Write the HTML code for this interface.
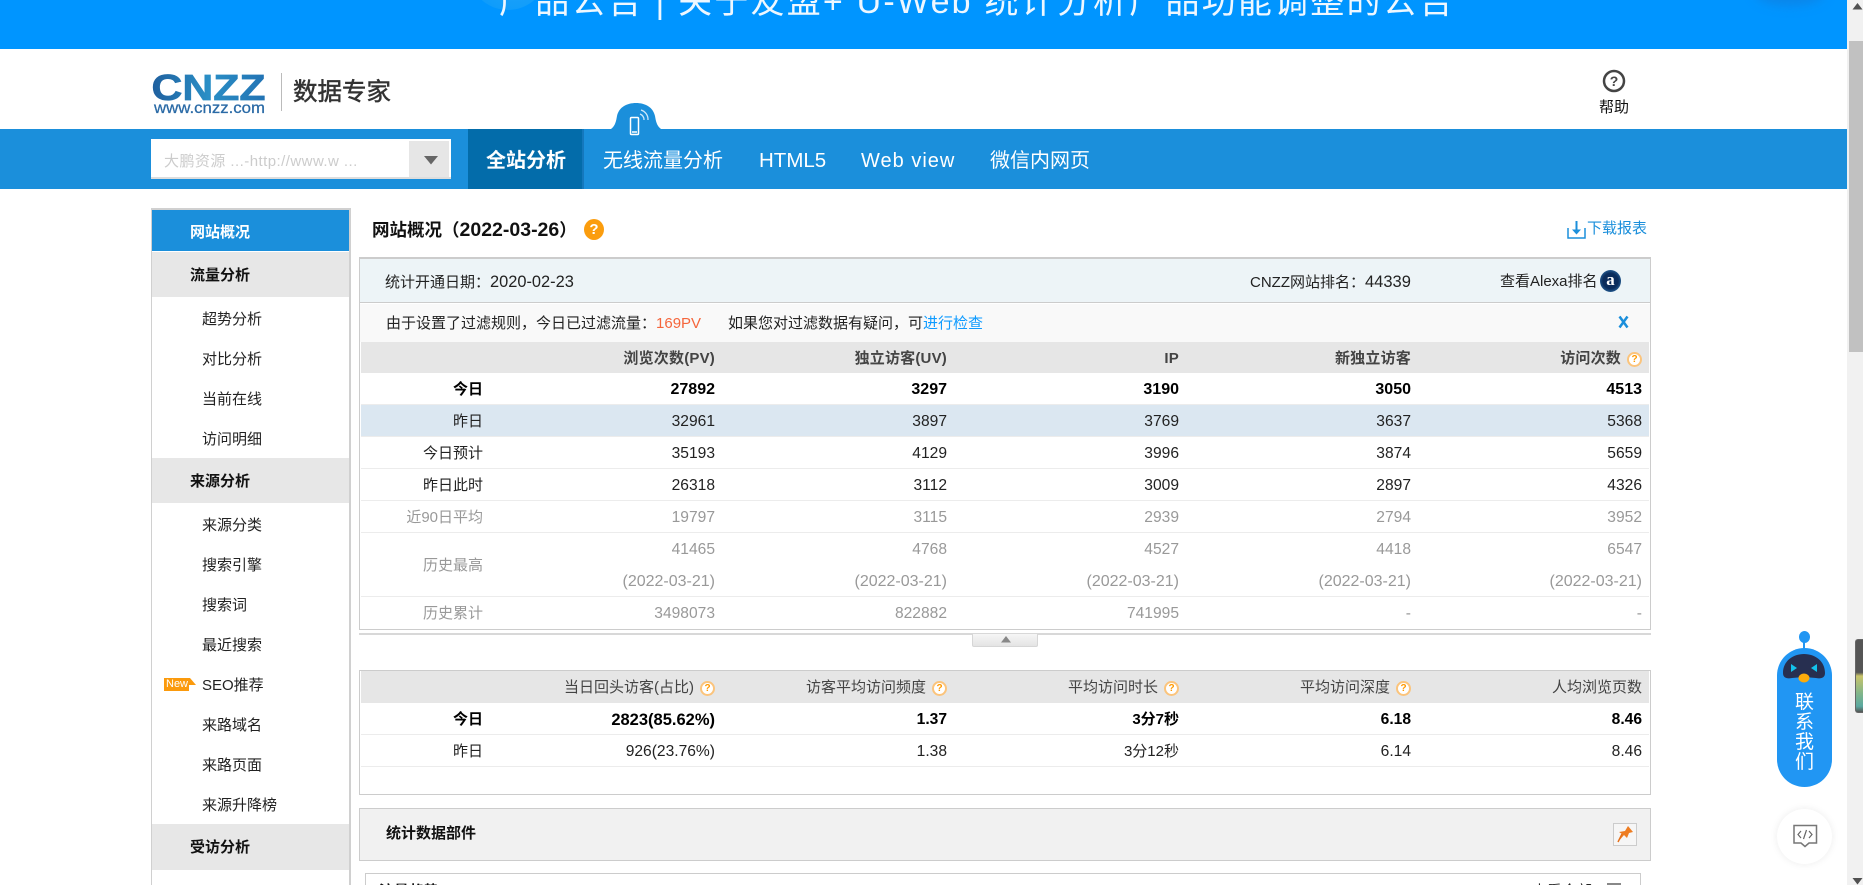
<!DOCTYPE html>
<html lang="zh-CN"><head><meta charset="utf-8"><title>网站概况</title>
<style>
*{box-sizing:border-box;margin:0;padding:0}
html,body{width:1863px;height:885px;overflow:hidden;background:#fff;font-family:"Liberation Sans","Noto Sans CJK SC",sans-serif;font-size:15px;color:#222}
#wrap{position:relative;width:1863px;height:885px;overflow:hidden;background:#fff}
.a{position:absolute;white-space:nowrap}
#banner{position:absolute;left:0;top:0;width:1847px;height:49px;background:#0095ff;overflow:hidden}
#banner .t{position:absolute;left:499px;top:-15px;font-size:34px;line-height:34px;letter-spacing:2.200px;color:#eef7ff;white-space:pre}
#nav{position:absolute;left:0;top:129px;width:1847px;height:60px;background:#1b8fdb}
#nav span{position:absolute;top:0;line-height:64px;font-size:20px;color:#fff;white-space:nowrap}
#side{position:absolute;left:151px;top:208px;width:200px;height:677px;border:1px solid #d0d0d0;border-top:2px solid #d0d0d0;border-right-width:2px;border-bottom:0}
.s{position:absolute;left:202px;font-size:15px;line-height:20px;color:#222;white-space:nowrap}
.g{position:absolute;left:152px;width:197px;background:#e7e7e7}
.h{position:absolute;left:190px;font-size:15px;line-height:20px;font-weight:bold;color:#111;white-space:nowrap}
.box{position:absolute;border:1px solid #ccc}
.r{position:absolute;left:361px;width:1288px;display:flex;border-bottom:1px solid #ececec}
.r>div{width:232px;text-align:right;white-space:nowrap;font-size:15.600px;position:relative;top:1px}
.r>div:first-child{width:122px;font-size:15px}
.r>div:last-child{width:231px}
.hd{background:#e6e6e6;border-bottom:0;color:#444}
.hd>div{font-size:15px!important}
.b1>div{font-weight:bold;color:#444;letter-spacing:.2px}
.r .bo{font-weight:bold;color:#000}
.gy>div{color:#999}
.nm>div{color:#222}
.d{font-size:16px}
.q{display:inline-block;width:15px;height:15px;border:2px solid #fbc47c;border-radius:50%;background:#fff;color:#f90;font-size:10px;line-height:11px;text-align:center;font-weight:bold;margin-left:6px;vertical-align:1px;letter-spacing:0}
</style></head><body>
<div id="wrap">

<div id="banner">
<div style="position:absolute;left:470px;top:-62px;width:76px;height:72px;border-radius:50%;background:radial-gradient(circle at 60% 40%,#2aa6f8,#0e9cfb 75%,#0095ff)"></div>
<div style="position:absolute;left:1755px;top:-22px;width:70px;height:28px;border-radius:50%;background:#0a86ea;filter:blur(5px)"></div>
<div class="t">产品公告 | 关于友盟+ U-Web 统计分析产品功能调整的公告</div>
</div>

<!-- scrollbar -->
<div style="position:absolute;left:1847px;top:0;width:16px;height:885px;background:#f1f1f1"></div>
<div style="position:absolute;left:1849px;top:41px;width:14px;height:311px;background:#c1c1c1"></div>
<svg class="a" style="left:1852px;top:3px" width="11" height="7"><path d="M5.500 0L10.500 6.500H.5z" fill="#505050"/></svg>
<svg class="a" style="left:1852px;top:878px" width="11" height="7"><path d="M5.500 6.500L10.500 0H.5z" fill="#505050"/></svg>
<div style="position:absolute;left:1855px;top:639px;width:8px;height:74px;border-radius:3px 0 0 3px;background:linear-gradient(180deg,#555 0,#555 45%,#c9c46a 50%,#7fb58b 75%,#5aa8a0 92%,#555 100%);border:1px solid #666;border-right:0"></div>

<!-- header -->
<svg class="a" style="left:150px;top:70px" width="120" height="46">
<defs><linearGradient id="lg" x1="0" y1="0" x2="1" y2="0"><stop offset="0" stop-color="#1f5f9e"/><stop offset=".5" stop-color="#2a8fc6"/><stop offset="1" stop-color="#2273b4"/></linearGradient></defs>
<text x="1.500" y="30" font-family="Liberation Sans" font-weight="bold" font-size="36" textLength="114" lengthAdjust="spacingAndGlyphs" fill="url(#lg)" stroke="url(#lg)" stroke-width=".7">CNZZ</text>
<text x="4" y="43" font-family="Liberation Sans" font-size="15.500" textLength="111" lengthAdjust="spacingAndGlyphs" fill="#2a6aa6" stroke="#2a6aa6" stroke-width=".25">www.cnzz.com</text>
</svg>
<div style="position:absolute;left:281px;top:73px;width:1px;height:38px;background:#bbb"></div>
<div class="a" style="left:293px;top:78px;font-size:24.500px;line-height:30px;color:#333;-webkit-text-stroke:.5px #333">数据专家</div>
<svg class="a" style="left:1602px;top:69px" width="24" height="24" viewBox="0 0 24 24"><circle cx="12" cy="12" r="10" fill="#fff" stroke="#444" stroke-width="2.500"/><text x="12" y="17" font-family="Liberation Sans" font-weight="bold" font-size="14" text-anchor="middle" fill="#444">?</text></svg>
<div class="a" style="left:1599px;top:98px;font-size:15px;line-height:20px;color:#111">帮助</div>

<!-- nav -->
<div id="nav">
<div style="position:absolute;left:151px;top:10px;width:300px;height:40px;background:#fff;border-bottom:2px solid #ddd"></div>
<div class="a" style="left:164px;top:23px;font-size:15px;line-height:20px;color:#ccc;letter-spacing:.45px">大鹏资源 ...-http://www.w ...</div>
<div style="position:absolute;left:409px;top:12px;width:40px;height:36px;background:#e6e6e6"></div>
<svg class="a" style="left:424px;top:27px" width="14" height="9"><path d="M0 0H14L7 8.500z" fill="#666"/></svg>
<div style="position:absolute;left:468px;top:0;width:116px;height:60px;background:#036caa;border-right:2px solid #1478bd"></div>
<span style="left:486px;font-weight:bold">全站分析</span>
<span style="left:603px">无线流量分析</span>
<span style="left:759px;font-size:20.500px">HTML5</span>
<span style="left:861px;letter-spacing:1px">Web view</span>
<span style="left:990px">微信内网页</span>
</div>
<svg class="a" style="left:610px;top:102px" width="52" height="36" viewBox="0 0 52 36">
<path d="M1 27C5 24 6 20 7 14C9 5 17 1 26 1C35 1 43 5 45 14C46 20 47 24 51 27z" fill="#1b8fdb"/>
<rect x="20.500" y="15.500" width="8" height="17" rx="1" fill="none" stroke="#fff" stroke-width="1.500"/>
<path d="M22 30h5" stroke="#fff" stroke-width="1.500"/>
<path d="M30 12a6 6 0 0 1 4 6M31 8a10 10 0 0 1 7 10" fill="none" stroke="#cfe8fa" stroke-width="1.300"/>
</svg>

<!-- sidebar -->
<div id="side"></div>
<div style="position:absolute;left:152px;top:210px;width:197px;height:41px;background:#1b8fdb"></div>
<div class="h" style="left:190px;top:223px;color:#fff">网站概况</div>
<div class="g" style="top:252px;height:45px"></div><div class="h" style="top:266px">流量分析</div>
<div class="s" style="top:310px">超势分析</div>
<div class="s" style="top:350px">对比分析</div>
<div class="s" style="top:390px">当前在线</div>
<div class="s" style="top:430px">访问明细</div>
<div class="g" style="top:458px;height:45px"></div><div class="h" style="top:472px">来源分析</div>
<div class="s" style="top:516px">来源分类</div>
<div class="s" style="top:556px">搜索引擎</div>
<div class="s" style="top:596px">搜索词</div>
<div class="s" style="top:636px">最近搜索</div>
<svg class="a" style="left:164px;top:678px" width="32" height="13"><path d="M0 0H26L32 7H25V13H0z" fill="#fb9a0c"/></svg>
<div class="a" style="left:166px;top:677px;font-size:11px;line-height:15px;color:#fff">New</div>
<div class="s" style="top:676px">SEO推荐</div>
<div class="s" style="top:716px">来路域名</div>
<div class="s" style="top:756px">来路页面</div>
<div class="s" style="top:796px">来源升降榜</div>
<div class="g" style="top:824px;height:46px"></div><div class="h" style="top:838px">受访分析</div>

<!-- title -->
<div class="a" style="left:372px;top:218px;font-size:17.500px;line-height:24px;font-weight:bold;color:#111">网站概况（<span style="font-size:19.500px">2022-03-26</span>）</div>
<div class="a" style="left:584px;top:219px;width:20px;height:21px;border-radius:50%;background:#fb9d0e;color:#fff;text-align:center;font-size:15px;line-height:21px;font-weight:bold">?</div>
<svg class="a" style="left:1567px;top:220px" width="20" height="19"><path d="M1 8V18H18V8" fill="none" stroke="#1b8fdb" stroke-width="1.500"/><path d="M9.500 1V12" stroke="#1b8fdb" stroke-width="2"/><path d="M5 9.500H14L9.500 14.500z" fill="#1b8fdb"/></svg>
<div class="a" style="left:1587px;top:219px;font-size:15px;line-height:20px;color:#1b8fdb">下载报表</div>

<!-- main box -->
<div class="box" style="left:359px;top:257px;width:1292px;height:373px;border-width:2px 1px 1px 1px"></div>
<div style="position:absolute;left:360px;top:259px;width:1290px;height:44px;background:#edf4f7;border-bottom:1px solid #ccc"></div>
<div class="a" style="left:385px;top:272px;line-height:20px">统计开通日期：<span style="font-size:16.400px">2020-02-23</span></div>
<div class="a" style="left:1250px;top:272px;line-height:20px">CNZZ网站排名：<span style="font-size:16.500px">44339</span></div>
<div class="a" style="left:1500px;top:272px;line-height:20px">查看Alexa排名</div>
<div class="a" style="left:1600px;top:270px;width:21px;height:22px;border-radius:50%;background:radial-gradient(circle at 50% 50%,#0a2c5c 50%,#3d8cc8);color:#fff;font:bold 17px/20px 'Liberation Serif',serif;text-align:center">a</div>

<div style="position:absolute;left:360px;top:304px;width:1290px;height:38px;background:#f9f9f9"></div>
<div class="a" style="left:386px;top:314px;line-height:20px">由于设置了过滤规则，今日已过滤流量：<span style="color:#f5663c">169PV</span></div>
<div class="a" style="left:728px;top:314px;line-height:20px">如果您对过滤数据有疑问，可<span style="color:#0e9bff">进行检查</span></div>
<svg class="a" style="left:1618px;top:315px" width="11" height="14"><path d="M1.500 1.500L9.500 12.500M9.500 1.500L1.500 12.500" stroke="#1b8fdb" stroke-width="2.500"/></svg>

<div class="r hd b1" style="top:342px;height:31px;line-height:31px"><div></div><div>浏览次数(PV)</div><div>独立访客(UV)</div><div>IP</div><div>新独立访客</div><div>访问次数<span class="q">?</span></div></div>
<div class="r" style="top:373px;height:32px;line-height:32px"><div class="bo">今日</div><div class="bo" style="font-size:16px">27892</div><div class="bo" style="font-size:16px">3297</div><div class="bo" style="font-size:16px">3190</div><div class="bo" style="font-size:16px">3050</div><div class="bo" style="font-size:16px">4513</div></div>
<div class="r nm" style="top:405px;height:32px;line-height:32px;background:#dbe7f1"><div>昨日</div><div>32961</div><div>3897</div><div>3769</div><div>3637</div><div>5368</div></div>
<div class="r nm" style="top:437px;height:32px;line-height:32px"><div>今日预计</div><div>35193</div><div>4129</div><div>3996</div><div>3874</div><div>5659</div></div>
<div class="r nm" style="top:469px;height:32px;line-height:32px"><div>昨日此时</div><div>26318</div><div>3112</div><div>3009</div><div>2897</div><div>4326</div></div>
<div class="r gy" style="top:501px;height:32px;line-height:32px"><div>近90日平均</div><div>19797</div><div>3115</div><div>2939</div><div>2794</div><div>3952</div></div>
<div class="r gy" style="top:533px;height:64px;line-height:32px"><div style="line-height:63px">历史最高</div><div>41465<br><span class="d">(2022-03-21)</span></div><div>4768<br><span class="d">(2022-03-21)</span></div><div>4527<br><span class="d">(2022-03-21)</span></div><div>4418<br><span class="d">(2022-03-21)</span></div><div>6547<br><span class="d">(2022-03-21)</span></div></div>
<div class="r gy" style="top:597px;height:32px;line-height:32px;border-bottom:0"><div>历史累计</div><div>3498073</div><div>822882</div><div>741995</div><div>-</div><div>-</div></div>

<!-- collapse -->
<div style="position:absolute;left:359px;top:633px;width:1292px;height:2px;background:#d8d8d8"></div>
<div style="position:absolute;left:972px;top:634px;width:66px;height:13px;background:linear-gradient(#f6f6f6,#e4e4e4);border:1px solid #d6d6d6;border-top:0;border-radius:0 0 2px 2px"></div>
<svg class="a" style="left:1001px;top:636px" width="10" height="7"><path d="M5 0L10 6.500H0z" fill="#888"/></svg>

<!-- second box -->
<div class="box" style="left:359px;top:670px;width:1292px;height:125px"></div>
<div class="r hd" style="top:671px;height:32px;line-height:32px"><div></div><div>当日回头访客(占比)<span class="q">?</span></div><div>访客平均访问频度<span class="q">?</span></div><div>平均访问时长<span class="q">?</span></div><div>平均访问深度<span class="q">?</span></div><div>人均浏览页数</div></div>
<div class="r" style="top:703px;height:32px;line-height:32px"><div class="bo">今日</div><div class="bo" style="font-size:16.500px">2823(85.62%)</div><div class="bo">1.37</div><div class="bo" style="font-size:15px">3分7秒</div><div class="bo">6.18</div><div class="bo">8.46</div></div>
<div class="r nm" style="top:735px;height:32px;line-height:32px"><div>昨日</div><div>926(23.76%)</div><div>1.38</div><div style="font-size:15px">3分12秒</div><div>6.14</div><div>8.46</div></div>

<!-- third box -->
<div class="box" style="left:359px;top:808px;width:1292px;height:53px;background:#f1f1f1;border-width:1px"></div>
<div class="a" style="left:386px;top:824px;font-size:15px;line-height:20px;font-weight:bold;color:#111">统计数据部件</div>
<svg class="a" style="left:1613px;top:823px" width="24" height="23" viewBox="0 0 24 23"><rect x=".5" y=".5" width="23" height="22" fill="#f6f6f6" stroke="#ccc"/><path d="M15 3L20 9L16 10L14 15L11 12L5 19L9 11L6 9L12 8z" fill="#ee7d22"/><path d="M9 11L5 19" stroke="#e5701a" stroke-width="1.500"/></svg>

<!-- fourth box -->
<div class="box" style="left:365px;top:873px;width:1276px;height:30px;border-width:1px"></div>
<div class="a" style="left:379px;top:882px;font-size:15px;line-height:20px;font-weight:bold;color:#111">流量趋势</div>
<div class="a" style="left:1532px;top:882px;font-size:15px;line-height:20px;color:#222">查看全部</div>
<div style="position:absolute;left:1607px;top:883px;width:14px;height:2px;background:#888"></div>

<!-- robot -->
<div style="position:absolute;left:1777px;top:648px;width:55px;height:139px;border-radius:28px;background:#2196f3"></div>
<div style="position:absolute;left:1798.500px;top:630.500px;width:11px;height:12px;border-radius:50%;background:#2196f3"></div>
<div style="position:absolute;left:1803px;top:640px;width:2px;height:10px;background:#2196f3"></div>
<svg class="a" style="left:1783px;top:654px" width="42" height="33" viewBox="0 0 42 33">
<path d="M0 19C0 7 10 0 21 0C32 0 42 7 42 19C42 24 38 25 33 24L21 23L9 24C4 25 0 24 0 19z" fill="#272f50"/>
<path d="M8 10L14 14L8 18z" fill="#13c2ec"/><path d="M34 10L28 14L34 18z" fill="#13c2ec"/>
<ellipse cx="21" cy="24" rx="5.500" ry="4.500" fill="#fbab0c"/></svg>
<div class="a" style="left:1795px;top:693px;width:19px;font-size:19px;line-height:20px;color:#fff;white-space:normal;text-align:center">联系我们</div>

<div style="position:absolute;left:1777px;top:809px;width:55px;height:55px;border-radius:50%;background:#fff;box-shadow:0 0 8px rgba(0,0,0,.08)"></div>
<svg class="a" style="left:1792px;top:824px" width="26" height="25" viewBox="0 0 26 25"><path d="M2 1.500H24.500V19H17L13 22.500L9 19H2z" fill="none" stroke="#777" stroke-width="1.500"/><path d="M9 7L6 10.500L9 14M17 7L20 10.500L17 14M14.500 6L11.500 15" fill="none" stroke="#666" stroke-width="1.200"/></svg>
</div>
</body></html>
